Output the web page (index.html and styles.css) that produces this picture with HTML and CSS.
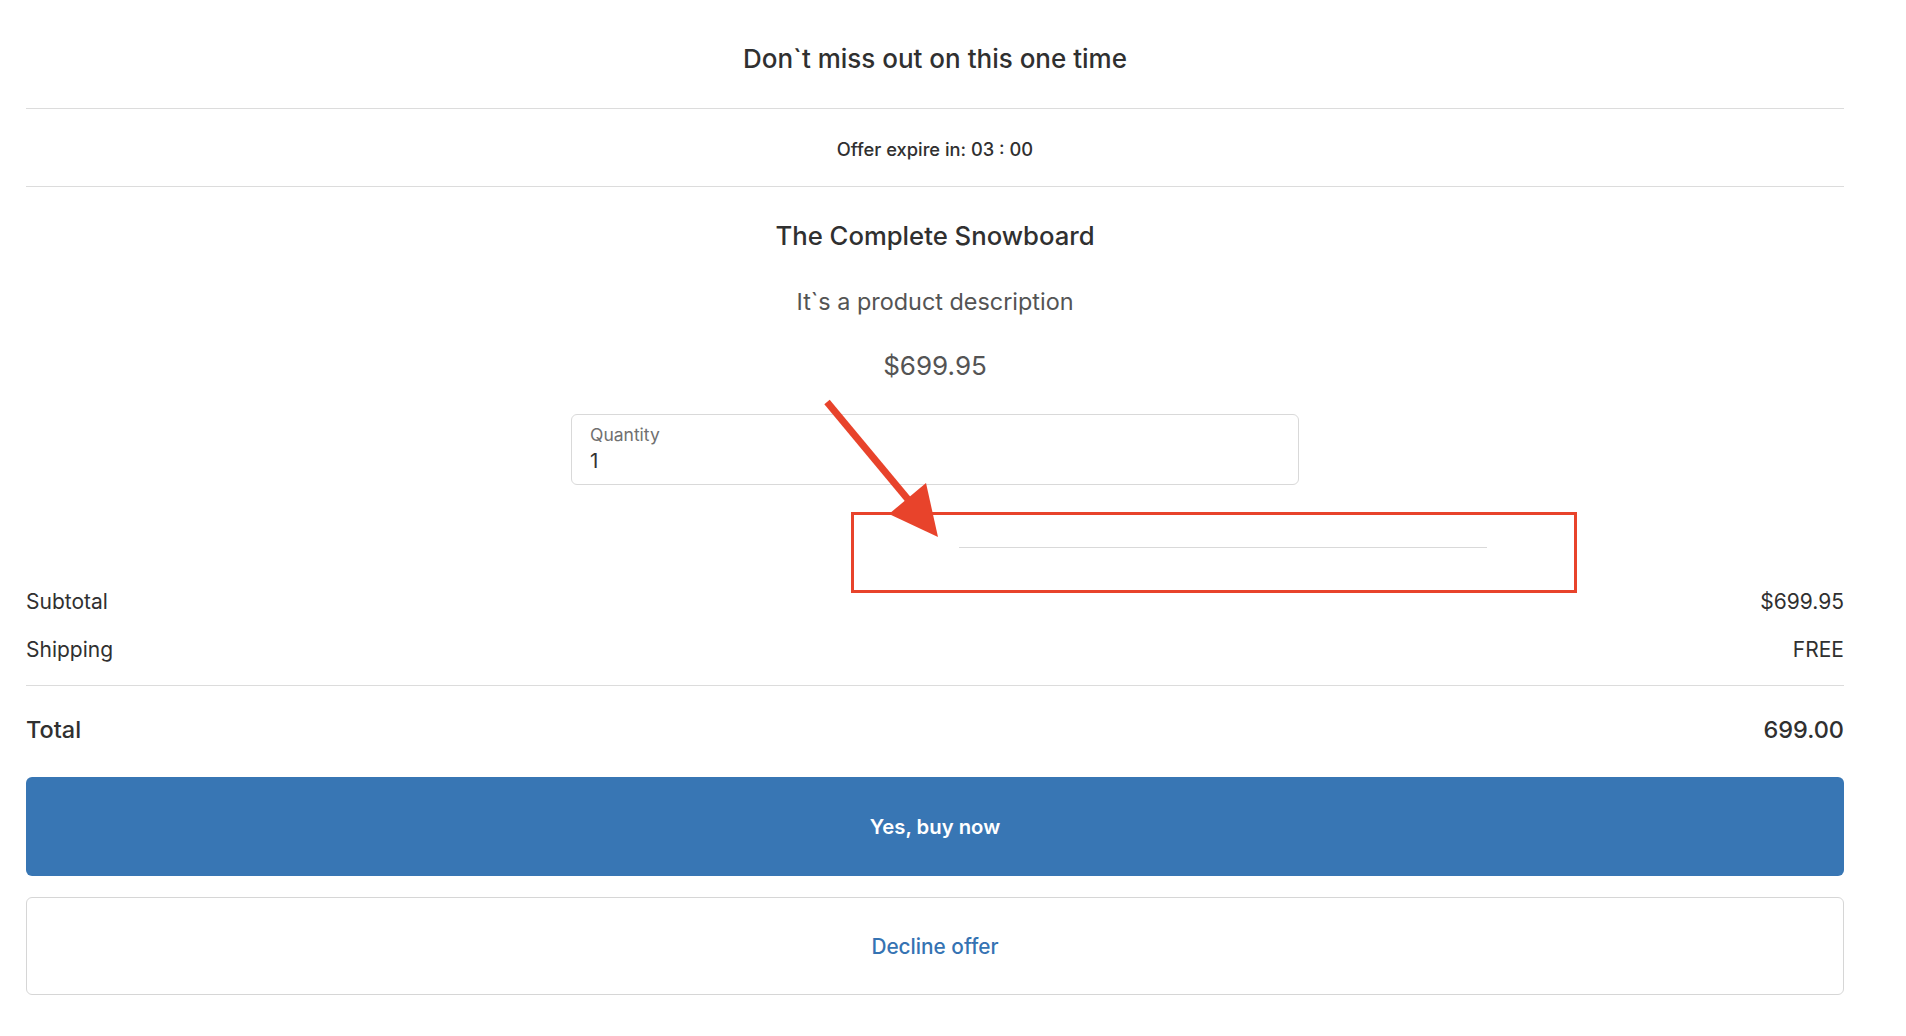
FILE: index.html
```html
<!DOCTYPE html>
<html lang="en">
<head>
<meta charset="utf-8">
<title>Offer</title>
<link rel="stylesheet" href="styles.css">
</head>
<body>
<div class="page">
  <div class="header">Don`t miss out on this one time</div>
  <div class="timer">Offer expire in: 03 : 00</div>
  <div class="product">
    <div class="product-title">The Complete Snowboard</div>
    <div class="product-desc">It`s a product description</div>
    <div class="product-price">$699.95</div>
    <div class="qty">
      <div class="qty-label">Quantity</div>
      <div class="qty-value">1</div>
    </div>
  </div>
  <div class="empty-line"></div>
  <div class="summary">
    <div class="row"><span>Subtotal</span><span>$699.95</span></div>
    <div class="row row-ship"><span>Shipping</span><span>FREE</span></div>
  </div>
  <div class="row row-total"><span>Total</span><span>699.00</span></div>
  <button class="btn btn-buy">Yes, buy now</button>
  <button class="btn btn-decline">Decline offer</button>
</div>
<svg class="annot" width="1906" height="1036" viewBox="0 0 1906 1036">
  <rect x="852.5" y="513.5" width="723" height="78" fill="none" stroke="#e8432b" stroke-width="3"/>
  <line x1="827" y1="402" x2="911" y2="503" stroke="#e8432b" stroke-width="7"/>
  <polygon points="938,537 889,514 926,483" fill="#e8432b"/>
</svg>
</body>
</html>
```
FILE: styles.css
```css
html, body {
  margin: 0;
  padding: 0;
  background: #ffffff;
}
body {
  position: relative;
  font-family: Inter, "Noto Sans", "Liberation Sans", sans-serif;
  color: #333333;
}
.page {
  margin: 0 62px 0 26px;
  padding-bottom: 40px;
}
.header {
  text-align: center;
  font-size: 26px;
  font-weight: 500;
  line-height: 32px;
  padding: 43px 0 33px;
  border-bottom: 1px solid #dcdcdc;
  color: #303030;
}
.timer {
  text-align: center;
  font-size: 18.3px;
  font-weight: 500;
  line-height: 24px;
  padding: 28px 0 25px;
  border-bottom: 1px solid #dcdcdc;
  color: #303030;
}
.product {
  display: flex;
  flex-direction: column;
  align-items: center;
  padding-top: 33px;
}
.product-title {
  font-size: 25.7px;
  font-weight: 500;
  line-height: 32px;
  color: #303030;
}
.product-desc {
  margin-top: 35px;
  font-size: 23.4px;
  line-height: 30px;
  color: #545454;
}
.product-price {
  margin-top: 33px;
  font-size: 26px;
  line-height: 32px;
  color: #545454;
}
.qty {
  margin-top: 32px;
  width: 690px;
  border: 1px solid #d9d9d9;
  border-radius: 6px;
  padding: 10px 18px 11px;
  display: flex;
  flex-direction: column;
  gap: 4px;
}
.qty-label {
  font-size: 17.5px;
  line-height: 20px;
  color: #707070;
}
.qty-value {
  font-size: 20.5px;
  line-height: 24px;
  color: #333333;
}
.empty-line {
  margin: 62px 0 0 933px;
  width: 528px;
  height: 1px;
  background: #d9d9d9;
}
.summary {
  padding-top: 40px;
  padding-bottom: 21px;
  border-bottom: 1px solid #dcdcdc;
  display: flex;
  flex-direction: column;
  gap: 20px;
}
.row {
  display: flex;
  justify-content: space-between;
  font-size: 21px;
  line-height: 28px;
  color: #303030;
}
.row-total {
  margin-top: 28px;
  font-size: 23.5px;
  line-height: 32px;
  font-weight: 500;
}
.btn {
  display: block;
  width: 100%;
  font-family: inherit;
  cursor: pointer;
  text-align: center;
}
.btn-buy {
  margin-top: 31px;
  height: 99px;
  border: none;
  border-radius: 6px;
  background: #3876b4;
  color: #ffffff;
  font-size: 20.3px;
  font-weight: 600;
}
.btn-decline {
  margin-top: 21px;
  height: 98px;
  border: 1px solid #d6d6d6;
  border-radius: 6px;
  background: #ffffff;
  color: #3573b3;
  font-size: 20.8px;
  font-weight: 500;
}
.annot {
  position: absolute;
  left: 0;
  top: 0;
  pointer-events: none;
}
```
